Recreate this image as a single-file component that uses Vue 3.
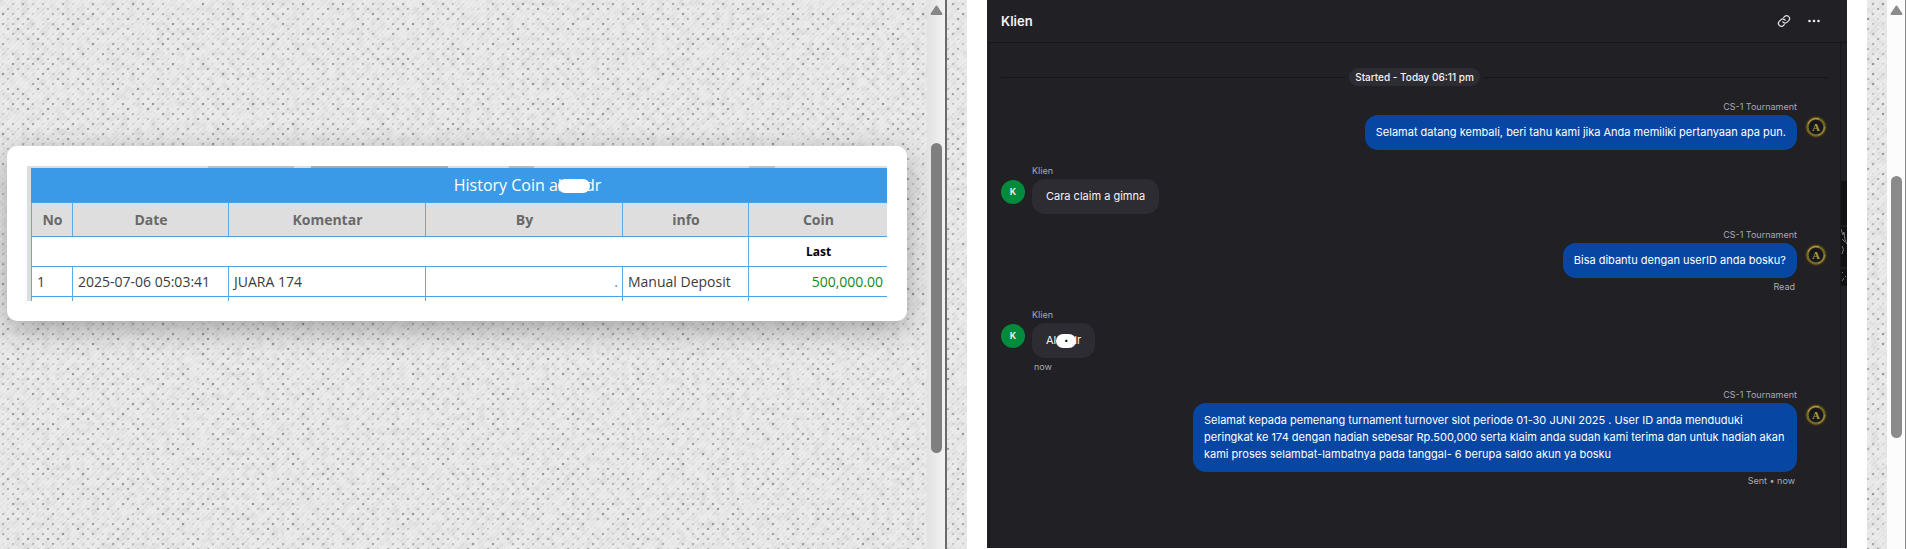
<script setup>
const columns = [
  { label: 'No', width: 41 },
  { label: 'Date', width: 156 },
  { label: 'Komentar', width: 197 },
  { label: 'By', width: 197 },
  { label: 'info', width: 126 },
  { label: 'Coin', width: 139 },
]
const total = columns.reduce((sum, c) => sum + c.width, 0)

const messages = [
  { from: 'agent', name: 'CS-1 Tournament', text: 'Selamat datang kembali, beri tahu kami jika Anda memiliki pertanyaan apa pun.' },
  { from: 'client', name: 'Klien', text: 'Cara claim a gimna' },
  { from: 'agent', name: 'CS-1 Tournament', text: 'Bisa dibantu dengan userID anda bosku?', status: 'Read' },
  { from: 'client', name: 'Klien', masked: ['Al', 'dr'], status: 'now' },
  {
    from: 'agent',
    name: 'CS-1 Tournament',
    text: 'Selamat kepada pemenang turnament turnover slot periode 01-30 JUNI 2025 . User ID anda menduduki peringkat ke 174 dengan hadiah sebesar Rp.500,000 serta klaim anda sudah kami terima dan untuk hadiah akan kami proses selambat-lambatnya pada tanggal- 6 berupa saldo akun ya bosku',
    status: 'Sent • now',
  },
]

const leftBar = { top: '26%', height: '56.6%' }
const rightBar = { top: '32%', height: '47.8%' }
</script>

<template>
  <div class="page">
    <svg class="texture" aria-hidden="true">
      <defs>
        <pattern id="weave" width="10" height="10" patternUnits="userSpaceOnUse">
          <circle cx="3" cy="4" r="1.300" fill="#979797" />
          <circle cx="8" cy="9" r="1.300" fill="#979797" />
        </pattern>
        <pattern id="threads" width="5" height="5" patternUnits="userSpaceOnUse">
          <path d="M-1 6L6-1M-1 1L1-1M4 6L6 4" stroke="#fff" stroke-width="1.200" opacity=".3" />
        </pattern>
        <filter id="grain" x="0" y="0" width="100%" height="100%">
          <feTurbulence type="fractalNoise" baseFrequency=".14" numOctaves="2" seed="4" />
          <feColorMatrix values="0 0 0 0 .5  0 0 0 0 .5  0 0 0 0 .5  .8 0 0 0 -.32" />
        </filter>
        <filter id="fade" x="0" y="0" width="100%" height="100%">
          <feTurbulence type="fractalNoise" baseFrequency=".09" numOctaves="2" seed="9" result="n" />
          <feColorMatrix in="n" values="0 0 0 0 0  0 0 0 0 0  0 0 0 0 0  2.4 0 0 0 -.75" result="m" />
          <feGaussianBlur in="SourceGraphic" stdDeviation=".7" result="b" />
          <feComposite in="b" in2="m" operator="in" />
        </filter>
      </defs>
      <rect width="100%" height="100%" fill="#e8e8e8" />
      <rect width="100%" height="100%" filter="url(#grain)" />
      <rect width="100%" height="100%" fill="url(#threads)" />
      <rect width="100%" height="100%" fill="url(#weave)" filter="url(#fade)" />
    </svg>

    <section class="left">
      <div class="card">
        <div class="shot">
          <i class="smudge s1"></i><i class="smudge s2"></i><i class="smudge s3"></i><i class="smudge s4"></i>
          <table>
            <colgroup>
              <col v-for="c in columns" :key="c.label" :style="{ width: (c.width / total) * 100 + '%' }" />
            </colgroup>
            <thead>
              <tr class="title">
                <th colspan="6">History Coin al<span class="mask"></span>dr</th>
              </tr>
              <tr class="head">
                <th v-for="c in columns" :key="c.label" scope="col">{{ c.label }}</th>
              </tr>
            </thead>
            <tbody>
              <tr class="row">
                <td colspan="5"></td>
                <td class="last">Last</td>
              </tr>
              <tr class="row">
                <td>1</td>
                <td>2025-07-06 05:03:41</td>
                <td>JUARA 174</td>
                <td class="by">.</td>
                <td>Manual Deposit</td>
                <td class="coin">500,000.00</td>
              </tr>
              <tr class="cut">
                <td v-for="c in columns" :key="c.label"></td>
              </tr>
            </tbody>
          </table>
        </div>
      </div>
    </section>

    <div class="bar bar-left" aria-hidden="true">
      <svg width="13" height="11" viewBox="0 0 13 11"><path d="M6.500 1.500L11.500 9H1.500Z" fill="#868686" stroke="#868686" stroke-width="2" stroke-linejoin="round" /></svg>
      <div class="thumb" :style="leftBar"></div>
    </div>

    <section class="right">
      <div class="frame">
        <main class="chat">
          <header>
            <h1>Klien</h1>
            <div class="tools">
              <button type="button" aria-label="Copy link">
                <svg width="14" height="14" viewBox="0 0 24 24" fill="none" stroke="#dedee2" stroke-width="2.200" stroke-linecap="round" stroke-linejoin="round">
                  <path d="M10 13.500a5 5 0 0 0 7.500.5l3-3a5 5 0 0 0-7-7l-2 1.800" />
                  <path d="M14 10.500a5 5 0 0 0-7.500-.5l-3 3a5 5 0 0 0 7 7l2-1.800" />
                </svg>
              </button>
              <button type="button" aria-label="More">
                <svg width="14" height="14" viewBox="0 0 14 14" fill="#e8e8ea">
                  <circle cx="2.500" cy="7" r="1.300" /><circle cx="7" cy="7" r="1.300" /><circle cx="11.500" cy="7" r="1.300" />
                </svg>
              </button>
            </div>
          </header>

          <div class="body">
            <div class="thread">
              <div class="divider"><span>Started - Today 06:11 pm</span></div>
              <article v-for="(m, i) in messages" :key="i" class="msg" :class="m.from">
                <div v-if="m.from === 'client'" class="avatar">K</div>
                <svg v-else class="avatar-logo" width="24" height="24" viewBox="0 0 24 24" aria-hidden="true">
                  <circle cx="12" cy="12" r="11" fill="#353018" />
                  <circle cx="12" cy="12" r="8.500" fill="#17181d" stroke="#766727" stroke-width="2.400" />
                  <path d="M4 9A8.500 8.500 0 0 1 15 4" fill="none" stroke="#bfa945" stroke-width="1" />
                  <path d="M20.500 12A8.500 8.500 0 0 1 14 20.300" fill="none" stroke="#a08b36" stroke-width="1" />
                  <text x="12" y="16" text-anchor="middle" class="mono">A</text>
                </svg>
                <div class="stack">
                  <div class="name">{{ m.name }}</div>
                  <div class="bubble">
                    <template v-if="m.masked">{{ m.masked[0] }}<span class="mask small">•</span>{{ m.masked[1] }}</template>
                    <template v-else>{{ m.text }}</template>
                  </div>
                  <div v-if="m.status" class="status">{{ m.status }}</div>
                </div>
              </article>
            </div>
            <div class="edge" aria-hidden="true">
              <svg width="6" height="106" viewBox="0 0 6 106">
                <path d="M0 0H6V106H0Z" fill="#111113" />
                <path d="M0 0H6M0 46H6M0 88H6" stroke="#2c2c31" />
                <path d="M0 49l2 6 1-3 1 8 2 4M1 59l3 3M1 66q3 3 0 8M1 92l1 1M4 96l1 1M1 101l2-3" fill="none" stroke="#77777b" />
              </svg>
            </div>
          </div>
        </main>
      </div>
    </section>

    <div class="bar bar-right" aria-hidden="true">
      <svg width="13" height="11" viewBox="0 0 13 11"><path d="M6.500 1.500L11.500 9H1.500Z" fill="#8b8b8b" stroke="#8b8b8b" stroke-width="2" stroke-linejoin="round" /></svg>
      <div class="thumb" :style="rightBar"></div>
    </div>
  </div>
</template>

<style>
body {
  margin: 0;
}
</style>

<style scoped>
* {
  box-sizing: border-box;
}
.page {
  position: relative;
  display: grid;
  grid-template-columns: minmax(0, 927fr) 20px minmax(0, 940fr) 19px;
  min-height: 100vh;
  overflow: hidden;
  font-family: Inter, "Liberation Sans", sans-serif;
}
.texture {
  position: absolute;
  inset: 0;
  width: 100%;
  height: 100%;
}
.left {
  position: relative;
  padding: 146px 20px 20px 7px;
}
.card {
  padding: 20px;
  border-radius: 10px;
  background: #fff;
  box-shadow: 0 8px 28px rgba(0, 0, 0, 0.3);
}
.shot {
  position: relative;
  padding: 2px 0 0 4px;
  background: #dcdedd;
}
.smudge {
  position: absolute;
  top: 0;
  height: 2px;
  background: #a4aab2;
}
.s1 { left: 21%; width: 10%; opacity: 0.6; }
.s2 { left: 33%; width: 16%; }
.s3 { left: 56%; width: 3%; opacity: 0.7; }
.s4 { left: 84%; width: 3%; opacity: 0.6; }
table {
  width: 100%;
  table-layout: fixed;
  border-spacing: 0;
  background: #fff;
  font: 14px/20px "Open Sans", "Noto Sans", sans-serif;
  color: #3b3b3b;
}
th,
td {
  padding: 0 4px 0 5px;
  border-left: 1px solid #5aabea;
  border-top: 1px solid #4aa2e6;
  white-space: nowrap;
}
.title th {
  height: 34px;
  padding: 0 0 2px 136px;
  border-color: #3b9ae8;
  background: #3b9ae8;
  color: #fff;
  font-size: 16px;
  font-weight: 400;
}
.head th {
  height: 34px;
  background: #dedede;
  color: #696969;
  font-weight: 700;
}
.row td {
  height: 30px;
}
.row .last {
  font-size: 12px;
  font-weight: 700;
  color: #000;
  text-align: center;
}
.row .by {
  color: #5e87a8;
  text-align: right;
}
.row .coin {
  color: #118a1b;
  text-align: right;
}
.cut td {
  height: 5px;
}
.mask {
  position: relative;
  display: inline-block;
  width: 32px;
  height: 14px;
  margin: 0 -5px 0 -4px;
  border-radius: 7px;
  background: #fff;
  vertical-align: middle;
}
.mask.small {
  width: 20px;
  margin: 0 -6px 0 0;
  color: #000;
  font-size: 7px;
  line-height: 14px;
  text-align: center;
}
.bar {
  position: relative;
  padding: 5px 3px;
}
.bar svg {
  display: block;
}
.bar-left {
  border-right: 2px solid #6b6b6b;
  background: linear-gradient(90deg, #e2e2e2, #f2f2f2);
}
.bar-right {
  border-right: 1px solid #8a8a8a;
  background: #fcfcfc;
}
.thumb {
  position: absolute;
  left: 4px;
  width: 11px;
  border-radius: 6px;
  background: #7f7f7f;
}
.bar-right .thumb {
  background: #8b8b8b;
}
.right {
  position: relative;
  display: flex;
  padding: 0 20px;
}
.frame {
  flex: 1;
  min-width: 0;
  display: flex;
  padding: 0 20px 1px;
  background: #fff;
}
.chat {
  flex: 1;
  min-width: 0;
  display: flex;
  flex-direction: column;
  background: #212025;
  color: #f4f4f6;
}
header {
  display: flex;
  align-items: center;
  justify-content: space-between;
  height: 43px;
  padding: 0 26px 0 14px;
  border-bottom: 1px solid #17171b;
}
h1 {
  margin: 0;
  font-size: 13px;
  line-height: 16px;
  font-weight: 600;
}
.tools {
  display: flex;
  gap: 16px;
}
button {
  display: block;
  padding: 0;
  border: 0;
  background: none;
}
button svg {
  display: block;
}
.body {
  flex: 1;
  display: flex;
  margin-left: 2px;
  border-left: 1px solid #18181c;
}
.thread {
  flex: 1;
  min-width: 0;
  display: flex;
  flex-direction: column;
  gap: 15px;
  padding: 25px 12px 15px 11px;
  border-right: 1px solid #18181c;
}
.edge {
  flex: 0 0 6px;
  padding-top: 137px;
}
.edge svg {
  display: block;
}
.divider {
  display: flex;
  align-items: center;
  gap: 4px;
  height: 18px;
  font-size: 10px;
  font-weight: 500;
}
.divider::before,
.divider::after {
  content: "";
  flex: 1;
  height: 1px;
  background: #17171a;
}
.divider span {
  padding: 0 6px;
  border-radius: 9px;
  background: #2d2c32;
  line-height: 18px;
}
.msg {
  display: flex;
  align-items: flex-start;
  gap: 7px;
}
.agent {
  flex-direction: row-reverse;
}
.avatar {
  flex: none;
  width: 24px;
  height: 24px;
  margin-top: 15px;
  border-radius: 50%;
  background: #028a3d;
  font-size: 9px;
  font-weight: 600;
  line-height: 24px;
  text-align: center;
}
.avatar-logo {
  flex: none;
  margin-top: 14px;
}
.mono {
  fill: #b09a3e;
  font: 700 11px "Liberation Serif", serif;
}
.stack {
  display: flex;
  flex-direction: column;
  align-items: flex-start;
  max-width: 604px;
}
.agent .stack {
  align-items: flex-end;
}
.name,
.status {
  color: #a9a9b2;
  font-size: 9px;
  line-height: 12px;
}
.status {
  padding: 3px 2px 1px;
}
.bubble {
  margin-top: 2px;
  padding: 9px 14px;
  border-radius: 13px;
  background: #2d2c32;
  font-size: 11px;
  line-height: 17px;
  font-weight: 400;
}
.agent .bubble {
  padding: 9px 11px;
  background: #0846a4;
  color: #fff;
}
</style>
